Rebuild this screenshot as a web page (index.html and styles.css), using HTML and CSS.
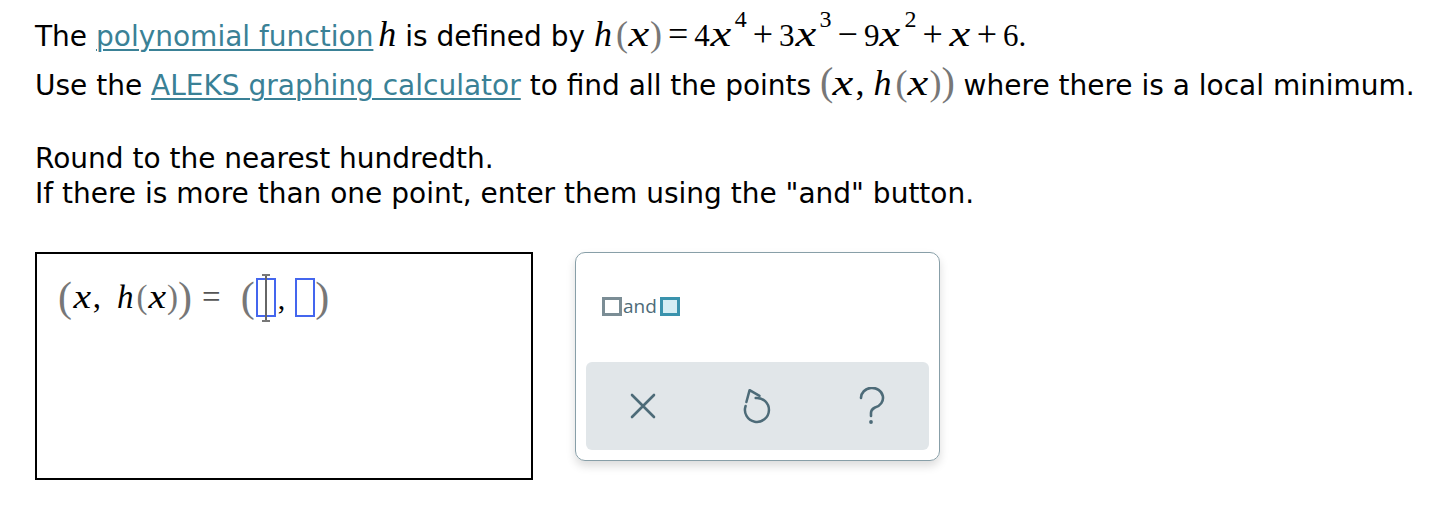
FILE: index.html
```html
<!DOCTYPE html>
<html>
<head>
<meta charset="utf-8">
<link rel="stylesheet" href="styles.css">
</head>
<body>
<div class="page">
  <p class="line l1">The <a class="link" href="#">polynomial function</a> <span class="m solo"><i class="v">h</i></span> is defined by <span class="m eq"><i class="v hv">h</i><span class="p">(</span><i class="v xv">x</i><span class="p">)</span><span class="op">=</span><span class="d">4</span><i class="v xv">x</i><sup>4</sup><span class="op">+</span><span class="d">3</span><i class="v xv">x</i><sup>3</sup><span class="op">−</span><span class="d">9</span><i class="v xv">x</i><sup>2</sup><span class="op">+</span><i class="v xv">x</i><span class="op">+</span><span class="d">6.</span></span></p>
  <p class="line l2">Use the <a class="link" href="#">ALEKS graphing calculator</a> to find all the points <span class="m pt"><span class="p big">(</span><i class="v xv">x</i><span class="cma">,</span><i class="v hv">h</i><span class="p">(</span><i class="v xv">x</i><span class="p">)</span><span class="p big">)</span></span> where there is a local minimum.</p>
  <p class="instr">Round to the nearest hundredth.<br>If there is more than one point, enter them using the "and" button.</p>
  <div class="work">
    <div class="answer">
      <div class="expr">
        <span class="p tall">(</span><i class="v xa">x</i><span class="cm">,</span><i class="v">h</i><span class="p pm">(</span><i class="v xa">x</i><span class="p">)</span><span class="p tall">)</span><span class="eqs">=</span><span class="p tall">(</span><span class="slot cur"><span class="caret"></span></span><span class="cm2">,</span><span class="slot"></span><span class="p tall">)</span>
      </div>
    </div>
    <div class="panel">
      <div class="and-btn"><span class="sq grey"></span><span class="and">and</span><span class="sq teal"></span></div>
      <div class="keys">
        <div class="key">
          <svg width="26" height="26" viewBox="0 0 26 26"><path d="M2 2 L24 24 M24 2 L2 24" stroke="#4d6b78" stroke-width="2.6" stroke-linecap="round" fill="none"/></svg>
        </div>
        <div class="key">
          <svg width="32" height="38" viewBox="0 0 32 38"><path d="M14.7 11 A12 12 0 1 1 4.6 19" stroke="#4d6b78" stroke-width="2.5" stroke-linecap="round" fill="none"/><path d="M5.4 15 L8.6 3.2 L18.5 8.8" stroke="#4d6b78" stroke-width="2.5" stroke-linecap="round" stroke-linejoin="round" fill="none"/></svg>
        </div>
        <div class="key">
          <svg width="28" height="38" viewBox="0 0 28 38"><path d="M3 11 A11 10 0 1 1 17 20.5 Q13 22.5 13 26 L13 29" stroke="#4d6b78" stroke-width="2.6" stroke-linecap="round" fill="none"/><circle cx="13" cy="35" r="1.9" fill="#4d6b78"/></svg>
        </div>
      </div>
    </div>
  </div>
</div>
</body>
</html>
```
FILE: styles.css
```css
html, body { margin: 0; padding: 0; background: #fff; }
.page {
  padding: 0 0 0 35px;
  font-family: "DejaVu Sans", Verdana, sans-serif;
  font-size: 28px;
  color: #000;
}
.line { margin: 0; white-space: nowrap; }
.l1 { padding-top: 14px; height: 48px; line-height: 40px; }
.l2 { height: 48px; line-height: 40px; }
.link { color: #3a8196; text-decoration: underline; text-underline-offset: 3px; text-decoration-thickness: 1.5px; }
.m { font-family: "Liberation Serif", "Times New Roman", serif; font-size: 36px; }
.solo { margin-left: -4px; }
.v { font-style: italic; }
.xv { display: inline-block; transform: scaleX(1.3); margin: 0 3px 0 3px; }
.xa { display: inline-block; transform: scaleX(1.2); margin: 0 2px 0 3px; }
.hv { margin-right: 4px; }
.d { font-size: 31px; }
.p { color: #777; }
.big { font-size: 40px; }
.op { margin: 0 6px; }
.m sup { font-size: 24px; vertical-align: 19px; line-height: 0; margin-left: 3px; }
.cma { margin: 0 9px 0 1px; }
.pt .xv:first-of-type { margin-left: 2px; }
.instr { margin: 31px 0 0; line-height: 35px; }
.work { display: flex; gap: 42px; margin-top: 41px; align-items: flex-start; }
.answer {
  width: 494px; height: 224px;
  border: 2px solid #000;
}
.expr {
  font-family: "Liberation Serif", "Times New Roman", serif;
  font-size: 33px;
  padding: 16px 0 0 21px;
  display: flex; align-items: center;
  height: 54px;
}
.tall { font-size: 42px; }
.pm { margin-left: 3px; }
.cm { margin: 0 16px 0 1px; }
.eqs { margin: 0 20px 0 10px; color: #555; }
.tall + .slot { margin-left: 1px; }
.slot { display: inline-block; width: 16px; height: 35px; border: 2px solid #4466ee; position: relative; }
.cur .caret { position: absolute; left: 7px; top: -6px; width: 2px; height: 48px; background: #666; }
.cur .caret::before, .cur .caret::after {
  content: ""; position: absolute; left: -3px; width: 8px; height: 2px; background: #777;
}
.cur .caret::before { top: 0; }
.cur .caret::after { bottom: 0; }
.cm2 { align-self: flex-end; margin: 0 10px 0 2px; font-size: 30px; padding-bottom: 8px; }
.panel {
  width: 343px; height: 197px;
  border: 1.5px solid #889fa8;
  border-radius: 10px;
  box-shadow: 0 5px 10px rgba(0,0,0,0.14);
  display: flex; flex-direction: column;
  padding: 0 10px 10px 10px;
  box-sizing: content-box;
}
.and-btn { display: flex; align-items: center; margin: 43px 0 0 16px; height: 20px; font-family: "Open Sans", sans-serif; font-size: 19px; color: #4e6b78; }
.sq { display: inline-block; width: 14px; height: 13px; border: 3px solid #7b8d95; background: #fff; }
.sq.teal { border-color: #3a93ad; background: #d5eef4; margin-left: 2px; }
.and { margin: 0 1px; line-height: 20px; }
.keys {
  margin-top: auto;
  height: 88px;
  background: #e1e6e9;
  border-radius: 6px;
  display: grid; grid-template-columns: 1fr 1fr 1fr;
  align-items: center; justify-items: center;
}
.key { display: flex; align-items: center; justify-content: center; }
```
